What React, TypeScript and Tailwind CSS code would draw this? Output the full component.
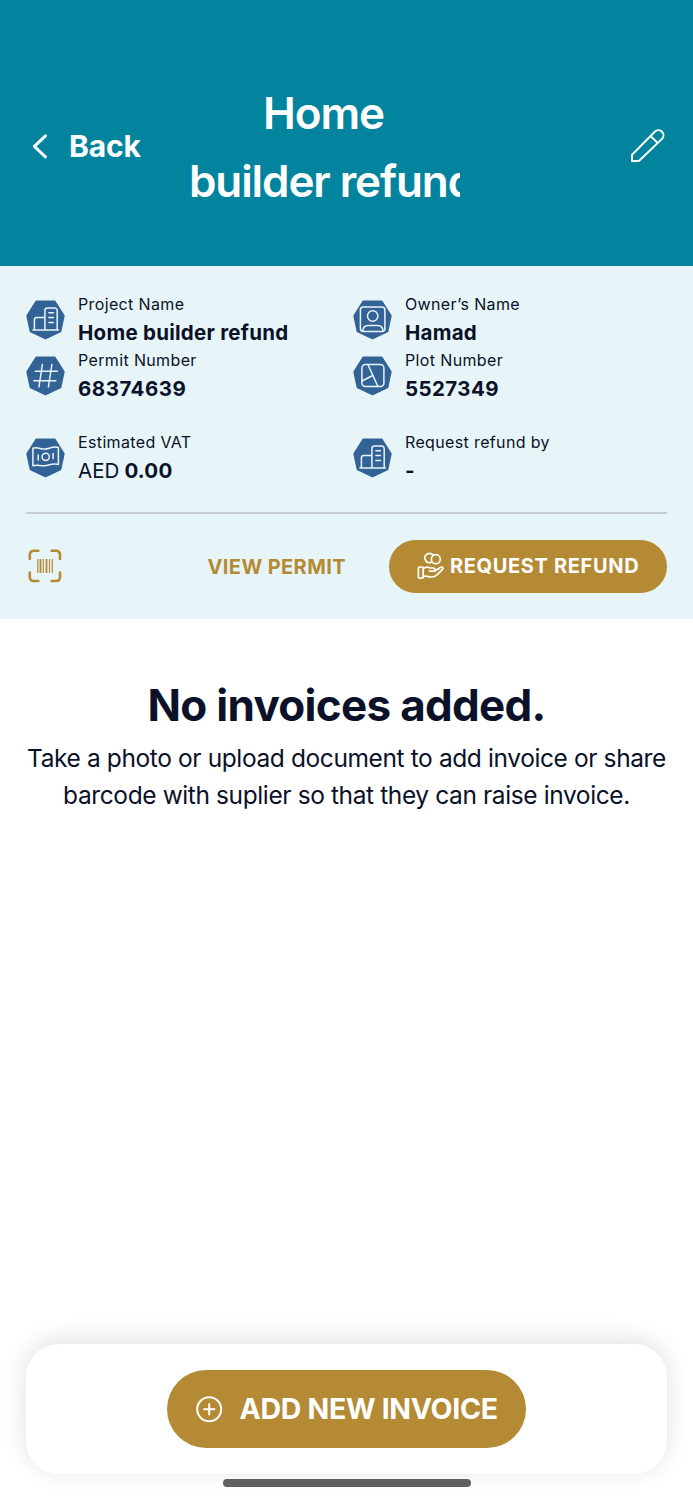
import type { ReactNode } from "react";

function Badge({ children }: { children: ReactNode }) {
  return (
    <svg className="mt-[9.5px] h-[40px] w-[40px] shrink-0" viewBox="0 0 40 40" fill="none">
      <path d="M10.400 1.700H28.600L37.600 15.800L34.300 31.300L19.500 38.200L4.700 31.300L1.400 15.800Z" fill="#336296" stroke="#336296" strokeWidth="2.200" strokeLinejoin="round" />
      <g transform="translate(-0.6 0)" stroke="#e8f5fa" strokeWidth="1.500" strokeLinecap="round" strokeLinejoin="round">{children}</g>
    </svg>
  );
}

function Building() {
  return (
    <Badge>
      <path d="M7.5 30H33M9 30V20a2.5 2.5 0 0 1 2.500-2.500H19.500M19.500 30V10.500a2.500 2.500 0 0 1 2.500-2.500H29.300a2.500 2.500 0 0 1 2.500 2.500V30M23.500 12.800H28M23.500 17.600H28M23.500 22.400H28" />
    </Badge>
  );
}

function Hash() {
  return (
    <Badge>
      <path d="M17 8.500L13.500 31M26.500 8.500L23 31M10 15.300H32M8.500 24.800H30.500" />
    </Badge>
  );
}

function Person() {
  return (
    <Badge>
      <rect x="8" y="7" width="24.500" height="24.500" rx="3" />
      <circle cx="20.300" cy="16" r="5.200" />
      <path d="M10.500 31C10.500 27 12.500 25.500 16 25.500H25C28.500 25.500 30.500 27 30.500 31" />
    </Badge>
  );
}

function Plot() {
  return (
    <Badge>
      <rect x="9.500" y="8.500" width="22" height="22" rx="3.500" />
      <path d="M15.500 8.500L25.500 30.500M9.500 25L20.300 19.500" />
    </Badge>
  );
}

function Cash() {
  return (
    <Badge>
      <path d="M7.500 10.200C13 8.500 17 12.500 23 10.500C27 9.200 30 8.500 33 9.500V26.500C28 25 25 26.500 21 27.500C16 28.700 12 26 7.500 27.800Z" />
      <circle cx="20.300" cy="18.800" r="3.600" />
      <path d="M12.800 17V22M27.700 15.500V20.500" />
    </Badge>
  );
}

function Field({ icon, label, children }: { icon: ReactNode; label: string; children: ReactNode }) {
  return (
    <div className="flex h-[56px]">
      {icon}
      <div className="ml-[12px] whitespace-nowrap">
        <div className="h-[28px] text-[16px] leading-[28px] tracking-[0.36px]">{label}</div>
        <div className="h-[28px] pt-px text-[20.5px] font-bold leading-[28px] tracking-[0.26px]">{children}</div>
      </div>
    </div>
  );
}

function BarcodeIcon() {
  return (
    <svg className="h-[34px] w-[34px]" viewBox="0 0 34 34" fill="none" stroke="#b48a34">
      <path d="M1.800 10V6Q1.800 1.800 6 1.800H10.300M23.500 1.800H28Q32 1.800 32 6V10M32 23.500V28Q32 32 28 32H23.500M10.300 32H6Q1.800 32 1.800 28V23.500" strokeWidth="2.600" strokeLinecap="round" />
      <path d="M9.800 10V24M15.300 10V24M21.500 10V24M24.300 10V24" strokeWidth="1.200" />
      <path d="M12.500 10V24M18.500 10V24" strokeWidth="1.800" />
    </svg>
  );
}

function RefundIcon() {
  return (
    <svg className="h-[28px] w-[28px] shrink-0" viewBox="0 0 28 28" fill="none" stroke="#fff" strokeWidth="1.700" strokeLinecap="round" strokeLinejoin="round">
      <circle cx="18.800" cy="7.200" r="4.500" />
      <path d="M14 10.400A4.600 4.600 0 1 1 16.200 3.300" />
      <rect x="1.400" y="15" width="4.800" height="11.200" rx="1.200" />
      <path d="M6.200 16.500C9 14.500 11.500 14.800 13.500 16H16.300C18.800 16 18.600 19.200 16.300 19.200H12.500M18.200 18.800L23.800 15.300C25.600 14.500 26.800 16.500 25.300 17.700L20 22.800C17.500 25.200 14 25.400 10.500 24.400C8.800 23.900 7.600 24 6.200 24.400" />
    </svg>
  );
}

export default function App() {
  return (
    <div className="flex h-[1500px] w-[693px] flex-col overflow-hidden bg-white font-['Inter',sans-serif] text-[#0a1128]">
      <header className="flex h-[266px] shrink-0 bg-[#02849f] pt-[79px] text-white">
        <div className="flex h-[134px] w-[189px] shrink-0 items-center pl-[32px]">
          <svg className="h-[26px] w-[16px]" viewBox="0 0 16 26" fill="none" stroke="#fff" strokeWidth="3" strokeLinecap="round" strokeLinejoin="round">
            <path d="M13.500 2.800L2.300 13.300L13.500 23.800" />
          </svg>
          <span className="ml-[21px] text-[30px] font-bold leading-[40px] tracking-[-0.1px]">Back</span>
        </div>
        <h1 className="w-[271px] overflow-hidden whitespace-nowrap text-[44px] font-semibold leading-[68px] tracking-[-1.1px]">
          <span className="block pr-[2px] text-center">Home</span>
          <span className="block">builder refund</span>
        </h1>
        <div className="flex h-[134px] flex-1 items-center justify-end pr-[27px]">
          <svg className="h-[38px] w-[38px]" viewBox="0 0 38 38" fill="none" stroke="#fff" strokeWidth="2" strokeLinejoin="round">
            <path d="M4 34.300V27.800L26.800 4.800A4.950 4.950 0 0 1 34 11.900L11.200 33.800ZM22.600 9.100L29.700 16" />
          </svg>
        </div>
      </header>
      <section className="h-[352.500px] shrink-0 bg-[#e7f5f9] px-[26px] pt-[24px]">
        <div className="grid grid-cols-[327px_1fr]">
          <Field icon={<Building />} label="Project Name">Home builder refund</Field>
          <Field icon={<Person />} label="Owner’s Name">Hamad</Field>
          <Field icon={<Hash />} label="Permit Number"><span className="tracking-[0.5px]">68374639</span></Field>
          <Field icon={<Plot />} label="Plot Number"><span className="tracking-[0.4px]">5527349</span></Field>
        </div>
        <div className="mt-[26px] grid grid-cols-[327px_1fr]">
          <Field icon={<Cash />} label="Estimated VAT"><span className="font-normal tracking-[0px]">AED</span> 0.00</Field>
          <Field icon={<Building />} label="Request refund by">-</Field>
        </div>
        <div className="mt-[28px] h-[2px] bg-[#c9ced1]" />
        <div className="mt-[25.500px] flex h-[53.500px] items-center">
          <div className="pl-[2px]"><BarcodeIcon /></div>
          <button className="ml-[145.500px] w-[138px] whitespace-nowrap pt-px text-left text-[20px] font-bold tracking-[0.4px] text-[#b48a34]">VIEW PERMIT</button>
          <button className="ml-auto flex h-full w-[278px] items-center whitespace-nowrap rounded-full bg-[#b48a34] pl-[28px] text-[20px] font-bold tracking-[0.65px] text-white">
            <RefundIcon />
            <span className="ml-[5px]">REQUEST REFUND</span>
          </button>
        </div>
      </section>
      <main className="flex-1 pt-[56px] text-center">
        <h2 className="whitespace-nowrap text-[44px] font-bold leading-[60px] tracking-[-0.7px]">No invoices added.</h2>
        <p className="mt-[5px] whitespace-nowrap text-[24.500px] leading-[37px] tracking-[-0.39px]">
          Take a photo or upload document to add invoice or share
          <br />
          barcode with suplier so that they can raise invoice.
        </p>
      </main>
      <footer className="flex h-[156px] shrink-0 flex-col items-center">
        <div className="flex h-[130px] w-[641px] shrink-0 items-center justify-center rounded-[33px] bg-white shadow-[0_-4px_24px_rgba(0,0,0,0.12)]">
          <button className="flex h-[78px] w-[359px] items-center whitespace-nowrap rounded-full bg-[#b48a34] pl-[28.500px] text-[28.500px] font-bold tracking-[-0.3px] text-white">
            <svg className="h-[27px] w-[27px] shrink-0" viewBox="0 0 27 27" fill="none" stroke="#fff" strokeWidth="2" strokeLinecap="round">
              <circle cx="13.200" cy="13.300" r="12" />
              <path d="M13.200 8.100V18.500M8 13.300H18.400" />
            </svg>
            <span className="ml-[17px] pt-px">ADD NEW INVOICE</span>
          </button>
        </div>
        <div className="mt-[4.500px] h-[8px] w-[248px] rounded-full bg-[#606060]" />
      </footer>
    </div>
  );
}
